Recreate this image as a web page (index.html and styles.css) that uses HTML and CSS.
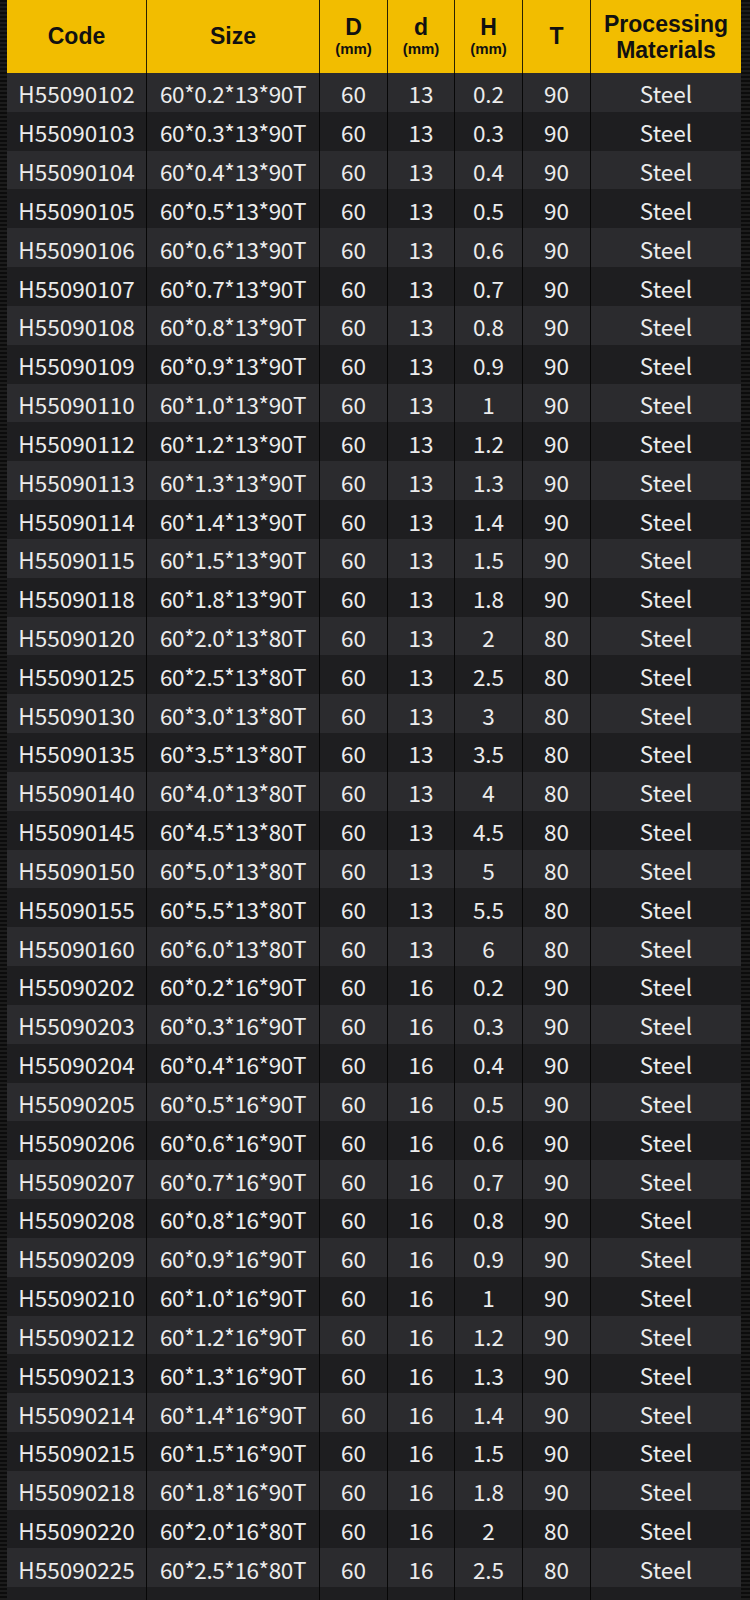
FILE: index.html
```html
<!DOCTYPE html>
<html>
<head>
<meta charset="utf-8">
<link rel="stylesheet" href="styles.css">
</head>
<body>
<div class="table">
  <div class="row head">
    <div class="cell">Code</div>
    <div class="cell">Size</div>
    <div class="cell"><span class="h">D</span><span class="u">(mm)</span></div>
    <div class="cell"><span class="h">d</span><span class="u">(mm)</span></div>
    <div class="cell"><span class="h">H</span><span class="u">(mm)</span></div>
    <div class="cell">T</div>
    <div class="cell proc">Processing<br>Materials</div>
  </div>
  <div id="body"></div>
</div>
<script src="script.js"></script>
</body>
</html>
```
FILE: styles.css
```css
html, body {
  margin: 0;
  padding: 0;
}
body {
  width: 750px;
  height: 1600px;
  overflow: hidden;
  background-color: #0c0c0c;
  background-image:
    repeating-linear-gradient(0deg, #1c1c1c 0 2px, transparent 2px 4px);
}
.table {
  margin-left: 7px;
  width: 734px;
  background: #1e1e20;
}
.row {
  display: grid;
  grid-template-columns: 140px 173px 68px 67px 68px 68px 150px;
  height: 38.84px;
}
.cell {
  border-right: 1px solid #070707;
  display: flex;
  align-items: center;
  justify-content: center;
  font-family: "Noto Sans CJK SC", "Noto Sans", sans-serif;
  font-size: 22.5px;
  color: #ececec;
  padding-top: 2px;
  box-sizing: border-box;
  white-space: nowrap;
}
.cell.size {
  letter-spacing: -0.4px;
}
.cell:last-child {
  border-right: none;
}
.row.odd {
  background: #2b2b2e;
}
.row.even {
  background: #1e1e20;
}
.row.head {
  height: 73px;
  background: #f2bd00;
}
.head .cell {
  font-family: "Liberation Sans", Arial, sans-serif;
  font-weight: bold;
  font-size: 23px;
  color: #111;
  flex-direction: column;
  padding-top: 0;
  border-right-color: #2a2200;
  text-align: center;
  line-height: 1;
  letter-spacing: 0;
}
.head .cell .h {
  font-size: 23px;
  line-height: 22px;
}
.head .cell .u {
  font-size: 15px;
  line-height: 16px;
  margin-top: 3px;
}
.head .proc {
  font-size: 23px;
  line-height: 26px;
}
```
FILE: script.js
```js
const rows = [
["H55090102","60*0.2*13*90T","60","13","0.2","90"],
["H55090103","60*0.3*13*90T","60","13","0.3","90"],
["H55090104","60*0.4*13*90T","60","13","0.4","90"],
["H55090105","60*0.5*13*90T","60","13","0.5","90"],
["H55090106","60*0.6*13*90T","60","13","0.6","90"],
["H55090107","60*0.7*13*90T","60","13","0.7","90"],
["H55090108","60*0.8*13*90T","60","13","0.8","90"],
["H55090109","60*0.9*13*90T","60","13","0.9","90"],
["H55090110","60*1.0*13*90T","60","13","1","90"],
["H55090112","60*1.2*13*90T","60","13","1.2","90"],
["H55090113","60*1.3*13*90T","60","13","1.3","90"],
["H55090114","60*1.4*13*90T","60","13","1.4","90"],
["H55090115","60*1.5*13*90T","60","13","1.5","90"],
["H55090118","60*1.8*13*90T","60","13","1.8","90"],
["H55090120","60*2.0*13*80T","60","13","2","80"],
["H55090125","60*2.5*13*80T","60","13","2.5","80"],
["H55090130","60*3.0*13*80T","60","13","3","80"],
["H55090135","60*3.5*13*80T","60","13","3.5","80"],
["H55090140","60*4.0*13*80T","60","13","4","80"],
["H55090145","60*4.5*13*80T","60","13","4.5","80"],
["H55090150","60*5.0*13*80T","60","13","5","80"],
["H55090155","60*5.5*13*80T","60","13","5.5","80"],
["H55090160","60*6.0*13*80T","60","13","6","80"],
["H55090202","60*0.2*16*90T","60","16","0.2","90"],
["H55090203","60*0.3*16*90T","60","16","0.3","90"],
["H55090204","60*0.4*16*90T","60","16","0.4","90"],
["H55090205","60*0.5*16*90T","60","16","0.5","90"],
["H55090206","60*0.6*16*90T","60","16","0.6","90"],
["H55090207","60*0.7*16*90T","60","16","0.7","90"],
["H55090208","60*0.8*16*90T","60","16","0.8","90"],
["H55090209","60*0.9*16*90T","60","16","0.9","90"],
["H55090210","60*1.0*16*90T","60","16","1","90"],
["H55090212","60*1.2*16*90T","60","16","1.2","90"],
["H55090213","60*1.3*16*90T","60","16","1.3","90"],
["H55090214","60*1.4*16*90T","60","16","1.4","90"],
["H55090215","60*1.5*16*90T","60","16","1.5","90"],
["H55090218","60*1.8*16*90T","60","16","1.8","90"],
["H55090220","60*2.0*16*80T","60","16","2","80"],
["H55090225","60*2.5*16*80T","60","16","2.5","80"],
["","","","","",""]
];
const body = document.getElementById("body");
rows.forEach((r, i) => {
  const row = document.createElement("div");
  row.className = "row " + (i % 2 === 0 ? "odd" : "even");
  const vals = r.concat([r[0] ? "Steel" : ""]);
  vals.forEach((v, j) => {
    const c = document.createElement("div");
    c.className = "cell" + (j === 1 ? " size" : "");
    c.textContent = v;
    row.appendChild(c);
  });
  body.appendChild(row);
});
```
